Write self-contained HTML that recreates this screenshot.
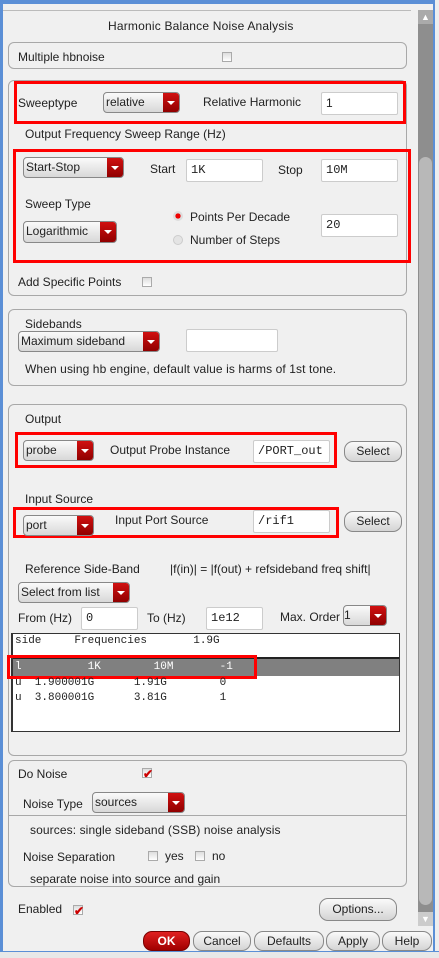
<!DOCTYPE html>
<html><head><meta charset="utf-8"><style>
*{box-sizing:border-box;margin:0;padding:0}
body{width:439px;height:958px;overflow:hidden;background:#f0f0f0;font-family:"Liberation Sans",sans-serif;font-size:12px;color:#222;position:relative}
.a{position:absolute;white-space:nowrap}
.box{position:absolute;border:1px solid #a8a8a8;border-radius:6px}
.red{position:absolute;border:3px solid #f00}
.dd{position:absolute;border:1px solid #888;border-radius:4px;background:linear-gradient(#fafafa,#d8d8d8);overflow:hidden;padding-left:2px;line-height:18px;font-size:12px}
.dd::after{content:"";position:absolute;right:0;top:0;bottom:0;width:16px;background:linear-gradient(#d01010,#900000)}
.dd i{position:absolute;right:4px;top:8px;width:0;height:0;border-left:4px solid transparent;border-right:4px solid transparent;border-top:4px solid #fff;z-index:2}
.in{position:absolute;background:#fff;border:1px solid #ccc;border-radius:2px;font-family:"Liberation Mono",monospace;font-size:12px;padding:3px 0 0 4px}
.btn{position:absolute;border:1px solid #888;border-radius:9px;background:linear-gradient(#fafafa,#d4d4d4);text-align:center;line-height:18px;font-size:12px}
.cb{position:absolute;width:10px;height:10px;border:1px solid #aaa;background:linear-gradient(#ddd,#fff)}
.ck{position:absolute;color:#c00;font-size:12px;font-weight:bold;line-height:10px}
.mono{font-family:"Liberation Mono",monospace;font-size:11px}
</style></head><body>
<div class="a" style="left:0;top:0;width:439px;height:4px;background:#5b8fd6"></div>
<div class="a" style="left:0;top:0;width:3px;height:958px;background:#5b8fd6"></div>
<div class="a" style="left:433px;top:0;width:2px;height:958px;background:#5b8fd6"></div>
<div class="a" style="left:435px;top:0;width:4px;height:958px;background:#eee"></div>
<div class="a" style="left:0;top:951px;width:439px;height:7px;background:#e8e8e8;border-top:1px solid #5b8fd6"></div>
<div class="a" style="left:3px;top:10px;width:408px;height:1px;background:#bbb"></div>
<!-- scrollbar -->
<div class="a" style="left:418px;top:10px;width:15px;height:915px;background:#8e8e8e"></div>
<div class="a" style="left:419px;top:157px;width:13px;height:748px;background:#b8b8b8;border-radius:7px"></div>
<div class="a" style="left:418px;top:10px;width:15px;height:14px;background:#aaa;color:#fff;font-size:9px;text-align:center;line-height:14px">▲</div>
<div class="a" style="left:418px;top:912px;width:15px;height:14px;background:#ccc;color:#fff;font-size:9px;text-align:center;line-height:14px">▼</div>

<div class="a" style="left:108px;top:19px;letter-spacing:0.2px">Harmonic Balance Noise Analysis</div>
<div class="box" style="left:8px;top:42px;width:399px;height:27px"></div>
<div class="a" style="left:18px;top:50px">Multiple hbnoise</div>
<div class="cb" style="left:222px;top:52px"></div>

<div class="box" style="left:8px;top:80px;width:399px;height:216px"></div>
<div class="red" style="left:14px;top:81px;width:392px;height:43px"></div>
<div class="a" style="left:18px;top:96px">Sweeptype</div>
<div class="dd" style="left:103px;top:92px;width:77px;height:21px">relative<i></i></div>
<div class="a" style="left:203px;top:95px">Relative Harmonic</div>
<div class="in" style="left:321px;top:92px;width:77px;height:23px;font-family:'Liberation Sans'">1</div>
<div class="a" style="left:25px;top:127px">Output Frequency Sweep Range (Hz)</div>
<div class="red" style="left:13px;top:149px;width:398px;height:114px"></div>
<div class="dd" style="left:23px;top:157px;width:101px;height:21px">Start-Stop<i></i></div>
<div class="a" style="left:150px;top:162px">Start</div>
<div class="in" style="left:186px;top:159px;width:77px;height:23px">1K</div>
<div class="a" style="left:278px;top:163px">Stop</div>
<div class="in" style="left:321px;top:159px;width:77px;height:23px">10M</div>
<div class="a" style="left:25px;top:197px">Sweep Type</div>
<div class="dd" style="left:23px;top:221px;width:94px;height:22px">Logarithmic<i></i></div>
<div class="a" style="left:173px;top:211px;width:10px;height:10px;border-radius:50%;background:radial-gradient(#e00 35%,#ddd 40%)"></div>
<div class="a" style="left:190px;top:210px">Points Per Decade</div>
<div class="a" style="left:173px;top:235px;width:10px;height:10px;border-radius:50%;background:#e4e4e4;border:1px solid #ccc"></div>
<div class="a" style="left:190px;top:233px">Number of Steps</div>
<div class="in" style="left:321px;top:214px;width:77px;height:23px">20</div>
<div class="a" style="left:18px;top:275px">Add Specific Points</div>
<div class="cb" style="left:142px;top:277px"></div>

<div class="box" style="left:8px;top:309px;width:399px;height:77px"></div>
<div class="a" style="left:25px;top:317px">Sidebands</div>
<div class="dd" style="left:18px;top:331px;width:142px;height:21px">Maximum sideband<i></i></div>
<div class="in" style="left:186px;top:329px;width:92px;height:23px"></div>
<div class="a" style="left:25px;top:362px;letter-spacing:0.1px">When using hb engine, default value is harms of 1st tone.</div>

<div class="box" style="left:8px;top:404px;width:399px;height:352px"></div>
<div class="a" style="left:25px;top:412px">Output</div>
<div class="red" style="left:15px;top:432px;width:322px;height:36px"></div>
<div class="dd" style="left:23px;top:440px;width:71px;height:21px">probe<i></i></div>
<div class="a" style="left:110px;top:443px">Output Probe Instance</div>
<div class="in" style="left:253px;top:440px;width:77px;height:23px">/PORT_out</div>
<div class="btn" style="left:344px;top:441px;width:58px;height:21px">Select</div>
<div class="a" style="left:25px;top:492px">Input Source</div>
<div class="red" style="left:13px;top:507px;width:326px;height:31px"></div>
<div class="dd" style="left:23px;top:515px;width:71px;height:21px">port<i></i></div>
<div class="a" style="left:115px;top:513px">Input Port Source</div>
<div class="in" style="left:253px;top:510px;width:77px;height:23px">/rif1</div>
<div class="btn" style="left:344px;top:511px;width:58px;height:21px">Select</div>
<div class="a" style="left:25px;top:562px">Reference Side-Band</div>
<div class="a" style="left:170px;top:562px">|f(in)| = |f(out) + refsideband freq shift|</div>
<div class="dd" style="left:18px;top:582px;width:112px;height:21px">Select from list<i></i></div>
<div class="a" style="left:18px;top:611px">From (Hz)</div>
<div class="in" style="left:81px;top:607px;width:57px;height:23px">0</div>
<div class="a" style="left:147px;top:611px">To (Hz)</div>
<div class="in" style="left:206px;top:607px;width:57px;height:23px">1e12</div>
<div class="a" style="left:280px;top:610px">Max. Order</div>
<div class="dd" style="left:343px;top:605px;width:44px;height:21px;padding-left:0">1<i></i></div>
<div class="a" style="left:11px;top:633px;width:389px;height:99px;background:#fff;border:1px solid #333;border-width:1px 1px 1px 2px"></div>
<div class="a mono" style="left:15px;top:635px;white-space:pre">side     Frequencies       1.9G</div>
<div class="a" style="left:13px;top:657px;width:386px;height:2px;background:#222"></div>
<div class="a" style="left:13px;top:659px;width:386px;height:17px;background:#808080"></div>
<div class="a mono" style="left:15px;top:661px;white-space:pre;color:#fff">l          1K        10M       -1</div>
<div class="red" style="left:7px;top:655px;width:250px;height:24px"></div>
<div class="a mono" style="left:15px;top:677px;white-space:pre">u  1.900001G      1.91G        0</div>
<div class="a mono" style="left:15px;top:692px;white-space:pre">u  3.800001G      3.81G        1</div>

<div class="box" style="left:8px;top:760px;width:399px;height:127px"></div>
<div class="a" style="left:8px;top:815px;width:399px;height:1px;background:#a8a8a8"></div>
<div class="a" style="left:18px;top:767px">Do Noise</div>
<div class="cb" style="left:142px;top:768px"></div><div class="ck" style="left:143px;top:769px">✔</div>
<div class="a" style="left:23px;top:797px">Noise Type</div>
<div class="dd" style="left:92px;top:792px;width:93px;height:21px">sources<i></i></div>
<div class="a" style="left:30px;top:823px;letter-spacing:0.1px">sources: single sideband (SSB) noise analysis</div>
<div class="a" style="left:23px;top:850px">Noise Separation</div>
<div class="cb" style="left:148px;top:851px"></div><div class="a" style="left:165px;top:849px">yes</div>
<div class="cb" style="left:195px;top:851px"></div><div class="a" style="left:212px;top:849px">no</div>
<div class="a" style="left:30px;top:872px">separate noise into source and gain</div>
<div class="a" style="left:18px;top:902px">Enabled</div>
<div class="cb" style="left:73px;top:905px"></div><div class="ck" style="left:74px;top:906px">✔</div>
<div class="btn" style="left:319px;top:898px;width:78px;height:23px;line-height:21px">Options...</div>
<div class="btn" style="left:143px;top:931px;width:47px;height:20px;background:linear-gradient(#e02020,#a00000);color:#fff;font-weight:bold;border-color:#700">OK</div>
<div class="btn" style="left:193px;top:931px;width:58px;height:20px">Cancel</div>
<div class="btn" style="left:254px;top:931px;width:70px;height:20px">Defaults</div>
<div class="btn" style="left:326px;top:931px;width:54px;height:20px">Apply</div>
<div class="btn" style="left:382px;top:931px;width:50px;height:20px">Help</div>
</body></html>
